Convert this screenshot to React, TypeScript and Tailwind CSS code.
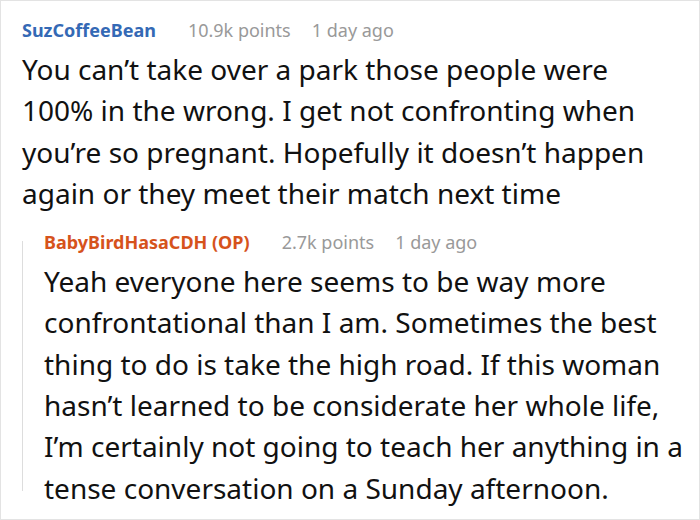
import React from 'react'

// コメント一件のヘッダー
function Meta({ name, nameClass, points, time }: { name: string; nameClass: string; points: string; time: string }) {
  return (
    <div className="flex items-baseline text-[18px] leading-[22px]">
      <span className={`font-bold ${nameClass}`}>{name}</span>
      <span className="ml-[32px] text-[#999999]">{points}</span>
      <span className="ml-[21px] text-[#999999]">{time}</span>
    </div>
  )
}

export default function App() {
  return (
    <div
      className="w-[700px] h-[520px] bg-white border border-[#e3e3e3] overflow-hidden"
      style={{ fontFamily: '"Noto Sans", "Open Sans", sans-serif' }}
    >
      <div className="pl-[21px] pr-[12px] pt-[18px]">
        <Meta name="SuzCoffeeBean" nameClass="text-[#3469b5]" points="10.9k points" time="1 day ago" />
        <p className="mt-[8px] pr-[27px] text-[28px] leading-[41.3px] text-[#111111]">
          You can’t take over a park those people were 100% in the wrong. I get not confronting when
          you’re so pregnant. Hopefully it doesn’t happen again or they meet their match next time
        </p>

        {/* 返信 */}
        <div className="mt-[17px] flex">
          <div className="w-px bg-[#dddddd] mt-[10px] mb-[18px]" />
          <div className="pl-[21px]">
            <Meta name="BabyBirdHasaCDH (OP)" nameClass="text-[#d6531c]" points="2.7k points" time="1 day ago" />
            <p className="mt-[8px] text-[28px] leading-[41.3px] text-[#111111] whitespace-nowrap">
              Yeah everyone here seems to be way more<br />
              confrontational than I am. Sometimes the best<br />
              thing to do is take the high road. If this woman<br />
              hasn’t learned to be considerate her whole life,<br />
              I’m certainly not going to teach her anything in a<br />
              tense conversation on a Sunday afternoon.
            </p>
          </div>
        </div>
      </div>
    </div>
  )
}
